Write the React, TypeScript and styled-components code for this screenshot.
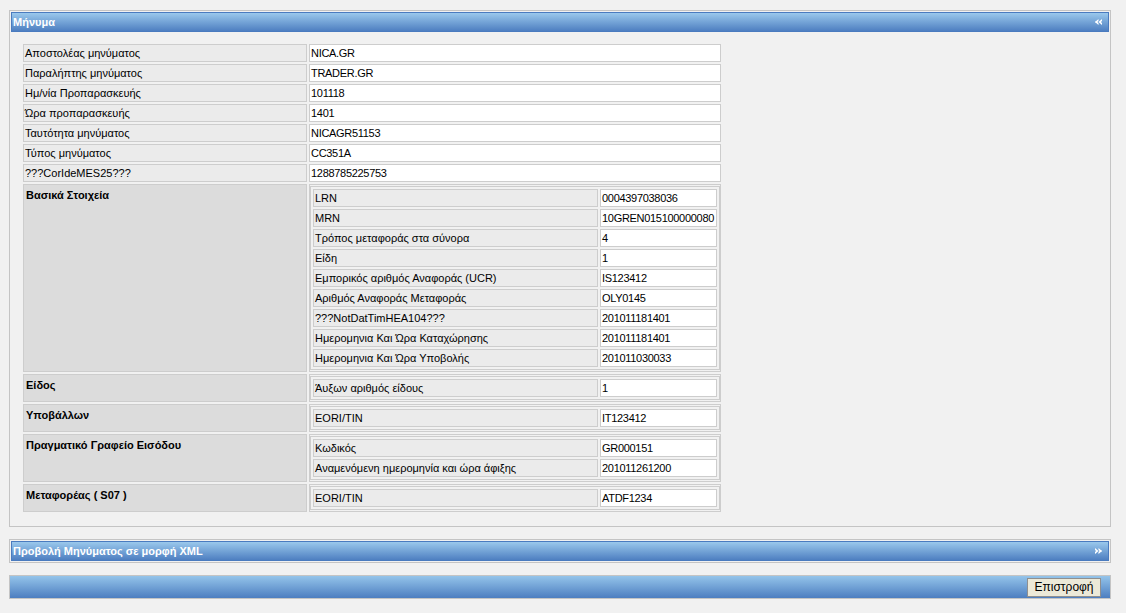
import React from "react";
import styled, { createGlobalStyle } from "styled-components";

const Global = createGlobalStyle`
  html, body { margin: 0; padding: 0; background: #f1f1f1; }
  body { font-family: "Liberation Sans", Arial, sans-serif; font-size: 11px; color: #000; }
`;

const Page = styled.div`
  width: 1102px;
  padding: 10px 0 0 9px;
  display: flex;
  flex-direction: column;
  gap: 12px;
`;

const Panel = styled.section`
  border: 1px solid #c4c4c4;
  padding: 1px;
  background: #f1f1f1;
`;

const Header = styled.div`
  height: 18px;
  border: 1px solid #4a7bbf;
  background: linear-gradient(#9ac8ec, #4e7fc1);
  display: flex;
  align-items: center;
  justify-content: space-between;
  padding: 0 6px 0 1px;
  color: #fff;
  font-weight: bold;
  font-size: 11px;
`;

const Content = styled.div`
  padding: 10px 10px 11px 10px;
`;

const Table = styled.table<{ $nested?: boolean }>`
  border-collapse: separate;
  border-spacing: 2px;
  table-layout: fixed;
  width: ${(p) => (p.$nested ? "100%" : "702px")};
  border: ${(p) => (p.$nested ? "1px solid #cdcdcd" : "none")};
  box-sizing: border-box;
`;

const Label = styled.td<{ $w?: number }>`
  box-sizing: border-box;
  width: ${(p) => (p.$w ? `${p.$w}px` : "auto")};
  height: 18px;
  border: 1px solid #cdcdcd;
  background: #ebebeb;
  padding: 0 1px;
  line-height: 16px;
  white-space: nowrap;
  overflow: hidden;
  vertical-align: middle;
`;

const Value = styled.td<{ $w?: number }>`
  box-sizing: border-box;
  width: ${(p) => (p.$w ? `${p.$w}px` : "auto")};
  height: 18px;
  border: 1px solid #cdcdcd;
  background: #fff;
  padding: 0 1px;
  line-height: 16px;
  letter-spacing: -0.3px;
  white-space: nowrap;
  overflow: hidden;
  vertical-align: middle;
`;

const SectionLabel = styled.td`
  box-sizing: border-box;
  border: 1px solid #cdcdcd;
  background: #dcdcdc;
  padding: 3px 2px;
  font-weight: bold;
  vertical-align: top;
  line-height: 14px;
`;

const SectionValue = styled.td`
  box-sizing: border-box;
  border: 1px solid #cdcdcd;
  padding: 1px 0;
  vertical-align: top;
`;

const Footer = styled.div`
  height: 22px;
  border: 1px solid #c4c4c4;
  background: linear-gradient(#94c4ea, #4d7ec0);
  display: flex;
  align-items: center;
  justify-content: flex-end;
  padding-right: 9px;
`;

const Button = styled.button`
  width: 74px;
  height: 19px;
  border: 1px solid #8f8f8f;
  background: #ece9d8;
  font-family: "Liberation Sans", Arial, sans-serif;
  font-size: 12px;
  color: #000;
  padding: 0;
  line-height: 17px;
`;

const Chevrons = ({ dir }: { dir: "left" | "right" }) => (
  <svg width="7" height="6" viewBox="0 0 7 6" style={{ transform: dir === "right" ? "scaleX(-1)" : undefined }}>
    <path d="M3.5 0 L0 3 L3.5 6 L3.5 4 L2.4 3 L3.5 2 Z" fill="#fff" />
    <path d="M7 0 L3.5 3 L7 6 L7 4 L5.9 3 L7 2 Z" fill="#fff" />
    <rect x="0.5" y="2.2" width="1.2" height="1.6" fill="#fff" />
  </svg>
);

type Pair = [string, string];

const top: Pair[] = [
  ["Αποστολέας μηνύματος", "NICA.GR"],
  ["Παραλήπτης μηνύματος", "TRADER.GR"],
  ["Ημ/νία Προπαρασκευής", "101118"],
  ["Ώρα προπαρασκευής", "1401"],
  ["Ταυτότητα μηνύματος", "NICAGR51153"],
  ["Τύπος μηνύματος", "CC351A"],
  ["???CorIdeMES25???", "1288785225753"],
];

const sections: { title: string; rows: Pair[] }[] = [
  {
    title: "Βασικά Στοιχεία",
    rows: [
      ["LRN", "0004397038036"],
      ["MRN", "10GREN015100000080"],
      ["Τρόπος μεταφοράς στα σύνορα", "4"],
      ["Είδη", "1"],
      ["Εμπορικός αριθμός Αναφοράς (UCR)", "IS123412"],
      ["Αριθμός Αναφοράς Μεταφοράς", "OLY0145"],
      ["???NotDatTimHEA104???", "201011181401"],
      ["Ημερομηνια Και Ώρα Καταχώρησης", "201011181401"],
      ["Ημερομηνια Και Ώρα Υποβολής", "201011030033"],
    ],
  },
  { title: "Είδος", rows: [["Άυξων αριθμός είδους", "1"]] },
  { title: "Υποβάλλων", rows: [["EORI/TIN", "IT123412"]] },
  {
    title: "Πραγματικό Γραφείο Εισόδου",
    rows: [
      ["Κωδικός", "GR000151"],
      ["Αναμενόμενη ημερομηνία και ώρα άφιξης", "201011261200"],
    ],
  },
  { title: "Μεταφορέας ( S07 )", rows: [["EORI/TIN", "ATDF1234"]] },
];

export default function App() {
  return (
    <>
      <Global />
      <Page>
        <Panel>
          <Header>
            <span>Μήνυμα</span>
            <Chevrons dir="left" />
          </Header>
          <Content>
            <Table>
              <tbody>
                {top.map(([l, v], i) => (
                  <tr key={l}>
                    <Label $w={i === 0 ? 284 : undefined}>{l}</Label>
                    <Value $w={i === 0 ? 412 : undefined}>{v}</Value>
                  </tr>
                ))}
                {sections.map((s) => (
                  <tr key={s.title}>
                    <SectionLabel>{s.title}</SectionLabel>
                    <SectionValue>
                      <Table $nested>
                        <tbody>
                          {s.rows.map(([l, v], i) => (
                            <tr key={l}>
                              <Label $w={i === 0 ? 285 : undefined}>{l}</Label>
                              <Value>{v}</Value>
                            </tr>
                          ))}
                        </tbody>
                      </Table>
                    </SectionValue>
                  </tr>
                ))}
              </tbody>
            </Table>
          </Content>
        </Panel>
        <Panel>
          <Header>
            <span>Προβολή Μηνύματος σε μορφή XML</span>
            <Chevrons dir="right" />
          </Header>
        </Panel>
        <Footer>
          <Button>Επιστροφή</Button>
        </Footer>
      </Page>
    </>
  );
}
